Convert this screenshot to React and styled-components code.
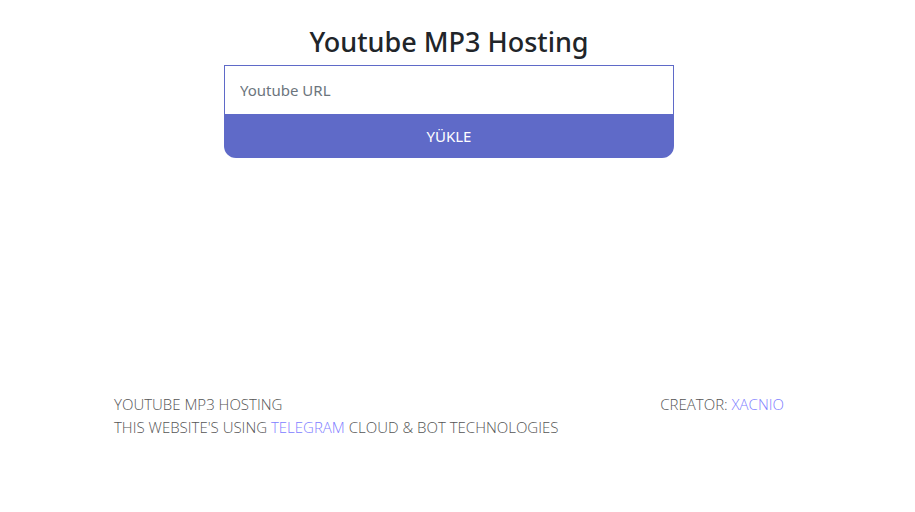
import React from 'react';
import styled, { createGlobalStyle } from 'styled-components';

const GlobalStyle = createGlobalStyle`
    html, body {
        margin: 0;
        padding: 0;
        background: #ffffff;
    }
    body {
        font-family: 'Open Sans', 'Noto Sans', sans-serif;
    }
`;

const Page = styled.div`
    width: 898px;
    height: 512px;
    display: flex;
    flex-direction: column;
    align-items: center;
`;

const Title = styled.h1`
    margin: 24px 0 0;
    height: 41px;
    font-family: 'Noto Sans', 'Open Sans', sans-serif;
    font-size: 27px;
    font-weight: 500;
    line-height: 36px;
    color: #212529;
`;

const Form = styled.form`
    width: 450px;
    display: flex;
    flex-direction: column;
`;

const UrlInput = styled.input`
    box-sizing: border-box;
    height: 49px;
    width: 100%;
    padding: 0 15px;
    border: 1px solid #5f6ac8;
    border-bottom: none;
    outline: none;
    font-family: 'Noto Sans', 'Open Sans', sans-serif;
    font-size: 15px;
    color: #495057;

    &::placeholder {
        color: #6c757d;
    }
`;

const SubmitButton = styled.button`
    height: 44px;
    width: 100%;
    border: none;
    border-radius: 0 0 12px 12px;
    background-color: #5f6ac8;
    color: #ffffff;
    font-family: 'Noto Sans', 'Open Sans', sans-serif;
    font-size: 15px;
    cursor: pointer;
`;

const Footer = styled.footer`
    margin-top: auto;
    margin-bottom: 73px;
    width: 670px;
    display: flex;
    justify-content: space-between;
    font-family: 'Open Sans', sans-serif;
    font-weight: 300;
    font-size: 15px;
    line-height: 23px;
    color: #555;
`;

const FooterLine = styled.div`
    white-space: nowrap;
`;

const Link = styled.a`
    color: #8080ff;
    text-decoration: none;
`;

const App = () => {
    return (
        <>
            <GlobalStyle />
            <Page>
                <Title>Youtube MP3 Hosting</Title>
                <Form onSubmit={(e) => e.preventDefault()}>
                    <UrlInput type="text" placeholder="Youtube URL" />
                    <SubmitButton type="submit">YÜKLE</SubmitButton>
                </Form>
                <Footer>
                    <div>
                        <FooterLine>YOUTUBE MP3 HOSTING</FooterLine>
                        <FooterLine>
                            THIS WEBSITE'S USING <Link href="#">TELEGRAM</Link> CLOUD &amp; BOT TECHNOLOGIES
                        </FooterLine>
                    </div>
                    <div>
                        <FooterLine>
                            CREATOR: <Link href="#">XACNIO</Link>
                        </FooterLine>
                    </div>
                </Footer>
            </Page>
        </>
    );
};

export default App;
